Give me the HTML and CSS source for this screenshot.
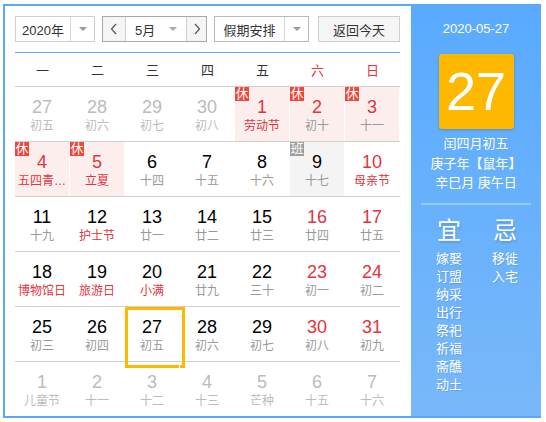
FILE: index.html
```html
<!DOCTYPE html>
<html lang="zh">
<head>
<meta charset="utf-8">
<title>万年历</title>
<link rel="stylesheet" href="styles.css">
</head>
<body>
<div class="cal">
  <div class="main">
    <div class="toolbar">
      <div class="sel year"><span class="sel-text">2020年</span><span class="sel-arrow"><i class="tri"></i></span></div>
      <div class="month-group">
        <span class="nav"><svg width="8" height="12" viewBox="0 0 8 12"><polyline points="6,1 1.5,6 6,11" fill="none" stroke="#555" stroke-width="1.2"/></svg></span>
        <span class="month-text">5月<i class="tri"></i></span>
        <span class="nav"><svg width="8" height="12" viewBox="0 0 8 12"><polyline points="2,1 6.5,6 2,11" fill="none" stroke="#555" stroke-width="1.2"/></svg></span>
      </div>
      <div class="sel holiday"><span class="sel-text">假期安排</span><span class="sel-arrow"><i class="tri"></i></span></div>
      <div class="btn-today">返回今天</div>
    </div>
    <div class="blue-line"></div>
    <div class="week">
      <span>一</span><span>二</span><span>三</span><span>四</span><span>五</span><span class="red">六</span><span class="red">日</span>
    </div>
    <div class="grid">
      <div class="row">
        <div class="cell other"><b>27</b><em>初五</em></div>
        <div class="cell other"><b>28</b><em>初六</em></div>
        <div class="cell other"><b>29</b><em>初七</em></div>
        <div class="cell other"><b>30</b><em>初八</em></div>
        <div class="cell rest red"><i class="badge">休</i><b>1</b><em class="fest">劳动节</em></div>
        <div class="cell rest red"><i class="badge">休</i><b>2</b><em>初十</em></div>
        <div class="cell rest red"><i class="badge">休</i><b>3</b><em>十一</em></div>
      </div>
      <div class="row">
        <div class="cell rest red"><i class="badge">休</i><b>4</b><em class="fest">五四青…</em></div>
        <div class="cell rest red"><i class="badge">休</i><b>5</b><em class="fest">立夏</em></div>
        <div class="cell"><b>6</b><em>十四</em></div>
        <div class="cell"><b>7</b><em>十五</em></div>
        <div class="cell"><b>8</b><em>十六</em></div>
        <div class="cell work"><i class="badge gray">班</i><b>9</b><em>十七</em></div>
        <div class="cell red"><b>10</b><em class="fest">母亲节</em></div>
      </div>
      <div class="row">
        <div class="cell"><b>11</b><em>十九</em></div>
        <div class="cell"><b>12</b><em class="fest">护士节</em></div>
        <div class="cell"><b>13</b><em>廿一</em></div>
        <div class="cell"><b>14</b><em>廿二</em></div>
        <div class="cell"><b>15</b><em>廿三</em></div>
        <div class="cell red"><b>16</b><em>廿四</em></div>
        <div class="cell red"><b>17</b><em>廿五</em></div>
      </div>
      <div class="row">
        <div class="cell"><b>18</b><em class="fest">博物馆日</em></div>
        <div class="cell"><b>19</b><em class="fest">旅游日</em></div>
        <div class="cell"><b>20</b><em class="fest">小满</em></div>
        <div class="cell"><b>21</b><em>廿九</em></div>
        <div class="cell"><b>22</b><em>三十</em></div>
        <div class="cell red"><b>23</b><em>初一</em></div>
        <div class="cell red"><b>24</b><em>初二</em></div>
      </div>
      <div class="row">
        <div class="cell"><b>25</b><em>初三</em></div>
        <div class="cell"><b>26</b><em>初四</em></div>
        <div class="cell today"><b>27</b><em>初五</em></div>
        <div class="cell"><b>28</b><em>初六</em></div>
        <div class="cell"><b>29</b><em>初七</em></div>
        <div class="cell red"><b>30</b><em>初八</em></div>
        <div class="cell red"><b>31</b><em>初九</em></div>
      </div>
      <div class="row last">
        <div class="cell other"><b>1</b><em>儿童节</em></div>
        <div class="cell other"><b>2</b><em>十一</em></div>
        <div class="cell other"><b>3</b><em>十二</em></div>
        <div class="cell other"><b>4</b><em>十三</em></div>
        <div class="cell other"><b>5</b><em>芒种</em></div>
        <div class="cell other"><b>6</b><em>十五</em></div>
        <div class="cell other"><b>7</b><em>十六</em></div>
      </div>
    </div>
  </div>
  <div class="panel">
    <div class="p-date">2020-05-27</div>
    <div class="p-day">27</div>
    <div class="p-line first">闰四月初五</div>
    <div class="p-line">庚子年【鼠年】</div>
    <div class="p-line">辛巳月 庚午日</div>
    <div class="p-sep"></div>
    <div class="yiji">
      <div class="col">
        <div class="yj-title">宜</div>
        <div class="yj-item">嫁娶</div>
        <div class="yj-item">订盟</div>
        <div class="yj-item">纳采</div>
        <div class="yj-item">出行</div>
        <div class="yj-item">祭祀</div>
        <div class="yj-item">祈福</div>
        <div class="yj-item">斋醮</div>
        <div class="yj-item">动土</div>
      </div>
      <div class="col">
        <div class="yj-title">忌</div>
        <div class="yj-item">移徙</div>
        <div class="yj-item">入宅</div>
      </div>
    </div>
  </div>
</div>
</body>
</html>
```
FILE: styles.css
```css
* { box-sizing: border-box; }
html, body { margin: 0; padding: 0; background: #fff; }
body {
  font-family: "Liberation Sans", "Noto Sans CJK SC", sans-serif;
  color: #333;
}
.cal {
  margin: 4px 0 0 3px;
  width: 538px;
  height: 414px;
  border: 2px solid #5aa9f9;
  border-right: none;
  display: flex;
  background: #fff;
}
.main {
  width: 406px;
  padding: 10px 11px 0 10px;
}
.toolbar {
  display: flex;
  height: 26px;
  font-size: 13px;
  color: #333;
}
.sel, .month-group, .btn-today {
  height: 26px;
  border: 1px solid #cfcfcf;
  display: flex;
  align-items: stretch;
  background: #fff;
}
.sel-text {
  display: flex;
  align-items: center;
  justify-content: center;
  border-right: 1px solid #d6d6d6;
}
.sel-arrow {
  display: flex;
  align-items: center;
  justify-content: center;
  flex: 1;
}
.tri {
  display: inline-block;
  width: 0;
  height: 0;
  border-left: 4px solid transparent;
  border-right: 4px solid transparent;
  border-top: 4px solid #999;
}
.year { width: 80px; }
.year .sel-text { width: 55px; }
.month-group {
  width: 105px;
  margin-left: 7px;
  border-color: #a8a8a8;
}
.nav {
  display: flex;
  align-items: center;
  justify-content: center;
  background: #f5f5f5;
}
.nav:first-child { width: 23px; border-right: 1px solid #d0d0d0; }
.nav:last-child { flex: 1; border-left: 1px solid #d0d0d0; }
.month-text {
  width: 60px;
  display: flex;
  align-items: center;
  justify-content: space-between;
  padding: 0 9px 0 9px;
}
.month-text .tri { border-top-color: #aaa; }
.holiday {
  width: 95px;
  margin-left: 7px;
  border-color: #b8b8b8;
}
.holiday .sel-text { width: 70px; }
.btn-today {
  width: 82px;
  margin-left: 9px;
  background: #f5f5f5;
  align-items: center;
  justify-content: center;
}
.blue-line {
  margin-top: 10px;
  height: 1px;
  background: #5aa9f9;
}
.week {
  display: flex;
  height: 34px;
  border-bottom: 1px solid #cfcfcf;
  font-size: 13px;
  color: #333;
}
.week span {
  width: 55px;
  display: flex;
  align-items: center;
  justify-content: center;
  padding-bottom: 1px;
}
.week .red { color: #e3333c; }
.row {
  display: flex;
  height: 55px;
  border-bottom: 1px solid #d0d0d0;
}
.row.last { border-bottom: none; height: 54px; }
.cell {
  position: relative;
  width: 55px;
  border-right: 1px solid #fff;
  text-align: center;
  padding-top: 10px;
  color: #000;
}
.cell b {
  display: block;
  font-weight: normal;
  font-size: 18px;
  line-height: 20px;
}
.cell em {
  display: block;
  font-style: normal;
  font-size: 12px;
  line-height: 18px;
  color: #999;
  white-space: nowrap;
}
.cell.red b { color: #e3333c; }
.cell em.fest { color: #e3333c; }
.cell.other b, .cell.other em { color: #bbb; }
.cell.rest { background: #fdeeee; }
.cell.work { background: #f4f4f4; }
.badge {
  position: absolute;
  top: 0;
  left: 0;
  width: 14px;
  height: 14px;
  background: #f2453a;
  color: #fff;
  font-style: normal;
  font-size: 13px;
  line-height: 14px;
  text-align: center;
}
.badge.gray { background: #9e9e9e; }
.cell.today::after {
  content: "";
  position: absolute;
  left: 0;
  top: 0;
  width: 54px;
  height: 55px;
  border: 3px solid #ffb800;
}
.panel {
  width: 130px;
  background: linear-gradient(to bottom, #59aaff, #78b8fa);
  color: #fff;
  display: flex;
  flex-direction: column;
  align-items: center;
  padding-top: 13px;
}
.p-date {
  font-size: 13px;
  line-height: 20px;
}
.p-day {
  margin-top: 15px;
  width: 75px;
  height: 75px;
  background: #ffb800;
  border-radius: 3px;
  box-shadow: 0 1px 3px rgba(0, 0, 0, 0.2);
  font-size: 54px;
  line-height: 75px;
  text-align: center;
}
.p-line {
  font-size: 13px;
  line-height: 19.5px;
  white-space: nowrap;
}
.p-line.first { margin-top: 5px; }
.p-sep {
  margin-top: 10px;
  width: 110px;
  height: 2px;
  background: rgba(255, 255, 255, 0.35);
}
.yiji {
  display: flex;
  align-self: stretch;
  padding-left: 10px;
  margin-top: 11px;
}
.yiji .col {
  width: 56px;
  display: flex;
  flex-direction: column;
  align-items: center;
}
.yj-title {
  font-size: 24px;
  line-height: 30px;
  margin-bottom: 4px;
  text-shadow: 1px 2px 2px rgba(0, 0, 0, 0.15);
}
.yj-item {
  font-size: 13px;
  line-height: 18px;
  text-shadow: 1px 1px 1px rgba(0, 0, 0, 0.12);
}
```
